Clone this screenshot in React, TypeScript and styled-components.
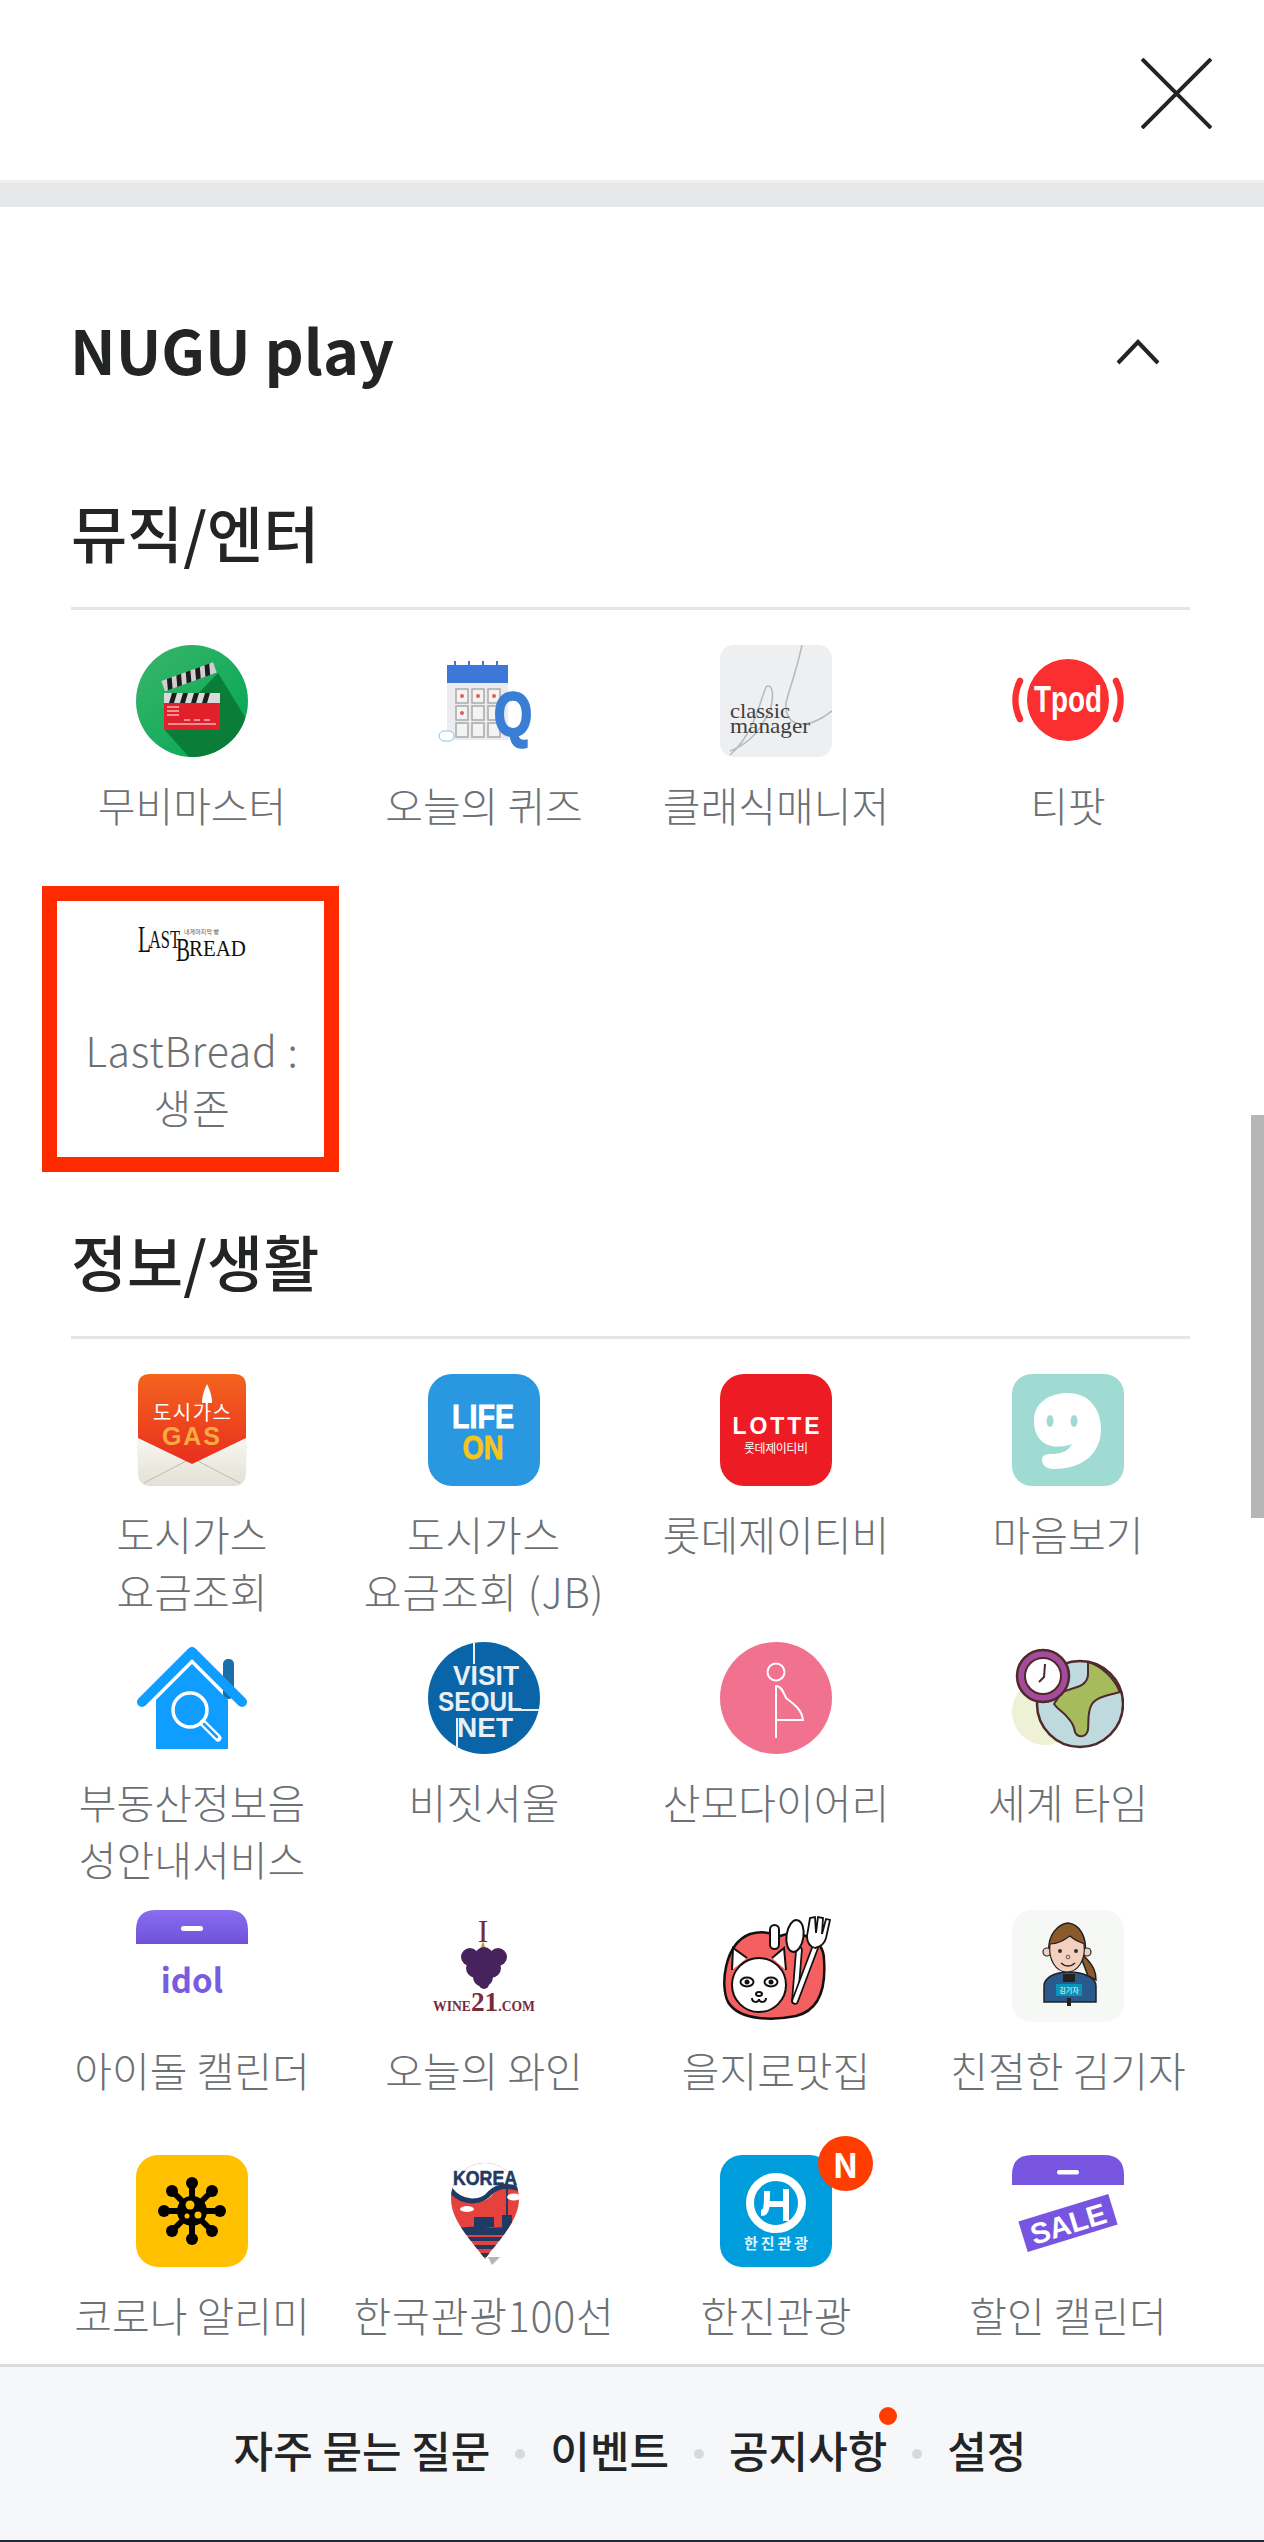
import React from 'react';
import styled, { createGlobalStyle } from 'styled-components';

const GlobalStyle = createGlobalStyle`
  html, body { margin: 0; padding: 0; background: #fff; }
  body { font-family: "Noto Sans CJK KR", "Noto Sans", sans-serif; }
  * { box-sizing: border-box; }
`;

const Page = styled.div`
  position: relative;
  width: 1264px;
  height: 2542px;
  display: flex;
  flex-direction: column;
  overflow: hidden;
  background: #fff;
`;

const Header = styled.header`
  height: 180px;
  flex: none;
  display: flex;
  justify-content: flex-end;
  align-items: center;
  padding: 7px 52px 0 0;
`;

const Band = styled.div`
  height: 27px;
  flex: none;
  background: #e6e7e9;
  border-top: 3px solid #eeeff0;
`;

const Main = styled.main`
  flex: 1;
  min-height: 0;
  overflow: hidden;
`;

const TitleRow = styled.div`
  display: flex;
  justify-content: space-between;
  align-items: center;
  height: 70px;
  margin-top: 110px;
  padding: 0 104px 0 70px;
`;

const Title = styled.h1`
  margin: -6px 0 0;
  font-size: 61px;
  line-height: 70px;
  font-weight: 700;
  color: #222426;
`;

const SectionHead = styled.h2<{ $gap: number }>`
  margin: ${(p) => p.$gap}px 74px 0 71px;
  padding-bottom: 40px;
  border-bottom: 3px solid #e4e5e6;
  font-size: 61px;
  line-height: 70px;
  font-weight: 500;
  color: #222426;
`;

const Grid = styled.div`
  display: grid;
  grid-template-columns: repeat(4, 292px);
  row-gap: 23px;
  margin-top: 35px;
  padding-left: 46px;
`;

const Item = styled.div`
  position: relative;
  min-height: 222px;
  display: flex;
  flex-direction: column;
  align-items: center;
`;

const IconBox = styled.div`
  position: relative;
  width: 112px;
  height: 112px;
  flex: none;
  svg { display: block; }
`;

const NewBadge = styled.span`
  position: absolute;
  left: 98px;
  top: -19px;
  width: 55px;
  height: 55px;
  border-radius: 50%;
  background: #ff3d00;
  color: #fff;
  font-size: 34px;
  line-height: 55px;
  font-weight: 700;
  text-align: center;
`;

const Label = styled.div<{ $wide?: boolean }>`
  margin-top: 19px;
  font-size: 41px;
  line-height: 57px;
  font-weight: 300;
  letter-spacing: ${(p) => (p.$wide ? '0.8px' : '0')};
  color: #6d7073;
  text-align: center;
  white-space: pre;
`;

const Highlight = styled.div`
  position: absolute;
  left: -4px;
  top: -4px;
  width: 297px;
  height: 286px;
  border: 15px solid #ff2a00;
  pointer-events: none;
`;

const ScrollThumb = styled.div`
  position: absolute;
  right: 0;
  top: 1115px;
  width: 13px;
  height: 403px;
  background: #b5b6b8;
`;

const Footer = styled.footer`
  height: 178px;
  flex: none;
  display: flex;
  justify-content: center;
  align-items: center;
  gap: 25px;
  padding-right: 4px;
  background: #f6f7f9;
  border-top: 3px solid #dcdddf;
  border-bottom: 2px solid #1f2a35;
`;

const FooterLink = styled.a`
  position: relative;
  margin-top: -8px;
  font-size: 43px;
  line-height: 57px;
  font-weight: 500;
  color: #222426;
`;

const FooterDot = styled.span`
  width: 10px;
  height: 10px;
  border-radius: 50%;
  background: #d8d9db;
`;

const NoticeDot = styled.span`
  position: absolute;
  right: -10px;
  top: -14px;
  width: 18px;
  height: 18px;
  border-radius: 50%;
  background: #ff3d00;
`;

const Svg = ({ children }: { children: React.ReactNode }) => (
  <svg width="112" height="112" viewBox="0 0 112 112" fill="none">
    {children}
  </svg>
);

const serif = '"Liberation Serif", serif';
const sans = '"Liberation Sans", sans-serif';
const kr = '"Noto Sans CJK KR", sans-serif';

const MovieIcon = () => (
  <Svg>
    <defs>
      <linearGradient id="mv" x1="0" y1="0" x2="1" y2="1">
        <stop offset="0" stopColor="#3bb56a" />
        <stop offset="1" stopColor="#00a653" />
      </linearGradient>
      <clipPath id="mvc"><circle cx="56" cy="56" r="56" /></clipPath>
    </defs>
    <circle cx="56" cy="56" r="56" fill="url(#mv)" />
    <path d="M82 28L120 90L60 120L28 84Z" fill="#0a7d38" clipPath="url(#mvc)" />
    <g transform="rotate(-20 30 46)">
      <rect x="29" y="35" width="55" height="11" fill="#cfcfcf" />
      <path d="M35 35h5l-3 11h-5zM45 35h5l-3 11h-5zM55 35h5l-3 11h-5zM65 35h5l-3 11h-5zM75 35h5l-3 11h-5z" fill="#1c1c1c" />
    </g>
    <rect x="28" y="48" width="56" height="10" fill="#d9d9d9" />
    <path d="M36 48h5l-3 10h-5zM47 48h5l-3 10h-5zM58 48h5l-3 10h-5zM69 48h5l-3 10h-5z" fill="#1c1c1c" />
    <rect x="28" y="58" width="56" height="27" fill="#e2202c" />
    <path d="M31 62h12M31 66h12M31 70h12M48 75h6M58 75h6M68 75h6M32 79h48" stroke="#f5b5b5" strokeWidth="1.4" />
  </Svg>
);

const QuizIcon = () => (
  <Svg>
    <rect x="19" y="20" width="61" height="75" fill="#ececef" />
    <rect x="19" y="20" width="61" height="18" fill="#3d78d8" />
    <path d="M27 16v12M41 16v12M55 16v12M69 16v12" stroke="#3d78d8" strokeWidth="2" />
    {[0, 1, 2].map((c) =>
      [0, 1, 2].map((r) => (
        <rect key={`${c}${r}`} x={28 + c * 16} y={44 + r * 17} width="12" height="14" fill="#f3f3f3" stroke="#a9a9a9" strokeWidth="1.5" />
      ))
    )}
    <circle cx="34" cy="51" r="2" fill="#e45b5b" />
    <circle cx="50" cy="51" r="2" fill="#e45b5b" />
    <circle cx="66" cy="51" r="2" fill="#e45b5b" />
    <circle cx="34" cy="68" r="2" fill="#e45b5b" />
    <text x="85" y="90" textAnchor="middle" fontFamily={sans} fontWeight="700" fontSize="62" fill="#3a7fd5" stroke="#3a7fd5" strokeWidth="2.5" textLength="38" lengthAdjust="spacingAndGlyphs">Q</text>
    <rect x="11" y="86" width="15" height="10" rx="5" fill="#fff" stroke="#8cc4ea" />
  </Svg>
);

const ClassicIcon = () => (
  <Svg>
    <rect width="112" height="112" rx="14" fill="#eeeff1" />
    <path d="M82 0C76 28 68 48 66 58C64 80 84 88 112 66M46 42C38 62 34 88 10 110M46 42C54 36 56 60 44 76C38 88 26 100 10 106" stroke="#b9babc" strokeWidth="1.6" />
    <text x="10" y="73" fontFamily={serif} fontSize="22" fill="#3e3f41" textLength="60" lengthAdjust="spacingAndGlyphs">classic</text>
    <text x="10" y="88" fontFamily={serif} fontSize="22" fill="#3e3f41" textLength="80" lengthAdjust="spacingAndGlyphs">manager</text>
  </Svg>
);

const TpodIcon = () => (
  <Svg>
    <circle cx="56" cy="55" r="41" fill="#fb2f2f" />
    <path d="M8 36C2 48 2 62 8 74M104 36C110 48 110 62 104 74" stroke="#fb2f2f" strokeWidth="6.5" strokeLinecap="round" />
    <text x="56" y="67" textAnchor="middle" fontFamily={sans} fontWeight="700" fontSize="36" fill="#fff" textLength="68" lengthAdjust="spacingAndGlyphs">Tpod</text>
  </Svg>
);

const BreadIcon = () => (
  <Svg>
    <text x="2" y="62" fontFamily={serif} fontSize="38" fill="#111" textLength="13" lengthAdjust="spacingAndGlyphs">L</text>
    <text x="13" y="58" fontFamily={serif} fontSize="25" fill="#111" textLength="31" lengthAdjust="spacingAndGlyphs">AST</text>
    <text x="40" y="71" fontFamily={serif} fontSize="34" fill="#111" textLength="14" lengthAdjust="spacingAndGlyphs">B</text>
    <text x="53" y="66" fontFamily={serif} fontSize="23" fill="#111" textLength="57" lengthAdjust="spacingAndGlyphs">READ</text>
    <text x="48" y="44" fontFamily={kr} fontSize="6" fill="#555" textLength="35">내게마지막 빵</text>
  </Svg>
);

const GasIcon = () => (
  <Svg>
    <defs>
      <linearGradient id="gas" x1="0" y1="0" x2="0" y2="1">
        <stop offset="0" stopColor="#f4641f" />
        <stop offset="1" stopColor="#e82e1e" />
      </linearGradient>
      <linearGradient id="env" x1="0" y1="0" x2="0" y2="1">
        <stop offset="0" stopColor="#f7f6f0" />
        <stop offset="1" stopColor="#e3e1d4" />
      </linearGradient>
    </defs>
    <path d="M1 66L2 100Q3 112 14 112H98Q109 112 110 100L111 66Z" fill="url(#env)" />
    <path d="M8 109L56 84L104 109" stroke="#bdbcb0" strokeWidth="1" />
    <path d="M2 64V12Q2 0 14 0H98Q110 0 110 12V64L56 90Z" fill="url(#gas)" />
    <path d="M71 10C67 18 66 24 66 29H76C76 24 75 18 71 10Z" fill="#fff" />
    <text x="56" y="46" textAnchor="middle" fontFamily={kr} fontSize="20" fill="#fff" textLength="78">도시가스</text>
    <text x="55" y="71" textAnchor="middle" fontFamily={sans} fontWeight="700" fontSize="25" fill="#f6ab40" textLength="58">GAS</text>
  </Svg>
);

const LifeIcon = () => (
  <Svg>
    <rect width="112" height="112" rx="24" fill="#2a98e0" />
    <text x="55" y="54" textAnchor="middle" fontFamily={sans} fontWeight="700" fontSize="33" fill="#fff" stroke="#fff" strokeWidth="0.8" textLength="62" lengthAdjust="spacingAndGlyphs">LIFE</text>
    <text x="55" y="85" textAnchor="middle" fontFamily={sans} fontWeight="700" fontSize="33" fill="#f5c51c" stroke="#f5c51c" strokeWidth="0.8" textLength="41" lengthAdjust="spacingAndGlyphs">ON</text>
  </Svg>
);

const LotteIcon = () => (
  <Svg>
    <rect width="112" height="112" rx="24" fill="#ed1c24" />
    <text x="56" y="60" textAnchor="middle" fontFamily={sans} fontWeight="700" fontSize="23" fill="#fff" textLength="87" lengthAdjust="spacing">LOTTE</text>
    <text x="56" y="79" textAnchor="middle" fontFamily={kr} fontSize="12" fill="#fff" textLength="64">롯데제이티비</text>
  </Svg>
);

const MindIcon = () => (
  <Svg>
    <rect width="112" height="112" rx="20" fill="#a0dbd3" />
    <path d="M22 47C22 28 38 19 56 19C76 19 89 34 89 55C89 80 70 95 42 95C33 95 30 90 30 86C30 82 33 80 38 80C48 80 56 78 60 70C40 77 22 70 22 47Z" fill="#fff" />
    <ellipse cx="38" cy="47" rx="3.5" ry="6" fill="#a0dbd3" />
    <ellipse cx="62" cy="47" rx="3.5" ry="6" fill="#a0dbd3" />
  </Svg>
);

const HouseIcon = () => (
  <Svg>
    <rect x="87" y="17" width="11" height="40" rx="5" fill="#1a6fa8" />
    <path d="M20 107V58L56 22L92 58V107Z" fill="#0f9dff" />
    <path d="M6 60L56 10L106 60" stroke="#0f9dff" strokeWidth="10" strokeLinecap="round" strokeLinejoin="round" />
    <circle cx="54" cy="68" r="17" stroke="#fff" strokeWidth="3.5" />
    <path d="M67 81L82 96" stroke="#fff" strokeWidth="7" strokeLinecap="round" />
    <path d="M68 82L81 95" stroke="#0f9dff" strokeWidth="2.5" strokeLinecap="round" />
  </Svg>
);

const SeoulIcon = () => (
  <Svg>
    <circle cx="56" cy="56" r="56" fill="#0a65a8" />
    <text x="58" y="43" textAnchor="middle" fontFamily={sans} fontWeight="700" fontSize="27" fill="#e8f0f6" textLength="66" lengthAdjust="spacingAndGlyphs">VISIT</text>
    <text x="52" y="69" textAnchor="middle" fontFamily={sans} fontWeight="700" fontSize="27" fill="#e8f0f6" textLength="84" lengthAdjust="spacingAndGlyphs">SEOUL</text>
    <text x="57" y="95" textAnchor="middle" fontFamily={sans} fontWeight="700" fontSize="27" fill="#e8f0f6" textLength="56" lengthAdjust="spacingAndGlyphs">NET</text>
    <path d="M46 0V22M92 68H112M29 76V108" stroke="#e8f0f6" strokeWidth="2" />
  </Svg>
);

const MomIcon = () => (
  <Svg>
    <circle cx="56" cy="56" r="56" fill="#f0728f" />
    <circle cx="56" cy="30" r="8.5" stroke="#fff" strokeWidth="2" />
    <path d="M56 96V44C62 44 64 52 66 56C74 62 82 68 83 78H56" stroke="#fff" strokeWidth="2" />
  </Svg>
);

const WorldIcon = () => (
  <Svg>
    <circle cx="33" cy="70" r="33" fill="#eef1d6" />
    <circle cx="68" cy="62" r="43" fill="#bfdadf" stroke="#4e2a2a" strokeWidth="2.5" />
    <path d="M76 20L76 32C76 40 70 44 62 46L50 50L42 62C46 68 52 70 56 76C60 80 62 84 63 90C66 96 74 96 76 88C77 78 75 70 80 62C84 56 92 54 108 50C102 36 90 24 76 20Z" fill="#a6bb5c" stroke="#4e2a2a" strokeWidth="2" />
    <circle cx="31" cy="34" r="26" fill="#a64a9c" stroke="#4e2a2a" strokeWidth="2.5" />
    <circle cx="31" cy="34" r="18" fill="#fff" stroke="#4e2a2a" strokeWidth="2" />
    <path d="M33 22L32 35L27 40" stroke="#4e2a2a" strokeWidth="2" />
  </Svg>
);

const IdolIcon = () => (
  <Svg>
    <defs>
      <linearGradient id="idl" x1="0" y1="0" x2="0" y2="1">
        <stop offset="0" stopColor="#8a6cf0" />
        <stop offset="1" stopColor="#6f52d8" />
      </linearGradient>
    </defs>
    <path d="M0 34V20Q0 0 20 0H92Q112 0 112 20V34Z" fill="url(#idl)" />
    <rect x="45" y="16" width="22" height="5" rx="2.5" fill="#fff" />
    <text x="56" y="83" textAnchor="middle" fontFamily={kr} fontWeight="700" fontSize="33" fill="#7a5ce0">idol</text>
  </Svg>
);

const WineIcon = () => (
  <Svg>
    <text x="55" y="32" textAnchor="middle" fontFamily={serif} fontSize="32" fill="#7a2a3a">I</text>
    <path d="M55 31L52 40H58Z" fill="#c79a3a" />
    <g fill="#46235c">
      <circle cx="42" cy="47" r="9" />
      <circle cx="56" cy="46" r="9" />
      <circle cx="70" cy="47" r="9" />
      <circle cx="48" cy="58" r="10" />
      <circle cx="63" cy="58" r="10" />
      <circle cx="55" cy="67" r="10" />
      <circle cx="56" cy="74" r="5" />
    </g>
    <text x="56" y="101" textAnchor="middle" fontFamily={serif} fontWeight="700" fontSize="14" fill="#7a2a3a" textLength="102" lengthAdjust="spacingAndGlyphs">
      WINE<tspan fontSize="28">21</tspan>.COM
    </text>
  </Svg>
);

const EuljiroIcon = () => (
  <Svg>
    <path d="M30 24C44 20 52 24 60 26C76 20 104 26 104 50C106 78 100 100 76 106C56 110 20 112 8 92C0 76 4 34 30 24Z" fill="#f45f5f" stroke="#111" strokeWidth="2.5" />
    <rect x="50" y="15" width="9" height="24" rx="4.5" fill="#fff" stroke="#111" strokeWidth="2" />
    <path d="M75 90L79 40" stroke="#111" strokeWidth="7.5" strokeLinecap="round" />
    <path d="M75 90L79 40" stroke="#fff" strokeWidth="4" strokeLinecap="round" />
    <ellipse cx="75" cy="26" rx="8.5" ry="16" fill="#fff" stroke="#111" strokeWidth="2" transform="rotate(8 75 26)" />
    <path d="M75 91L95 38" stroke="#111" strokeWidth="7.5" strokeLinecap="round" />
    <path d="M75 91L95 38" stroke="#fff" strokeWidth="4" strokeLinecap="round" />
    <path d="M90 8L87 26Q87 36 95 38Q104 36 106 28L110 10L106 9L102 24L103 8L98 7L96 23L95 7Z" fill="#fff" stroke="#111" strokeWidth="1.8" />
    <path d="M12 60L13 38L27 48" fill="#fff" stroke="#111" strokeWidth="2" />
    <path d="M52 48L64 38L66 60" fill="#fff" stroke="#111" strokeWidth="2" />
    <circle cx="39" cy="75" r="27" fill="#fff" stroke="#111" strokeWidth="2" />
    <ellipse cx="27" cy="72" rx="6.5" ry="4.5" stroke="#111" strokeWidth="2" />
    <ellipse cx="51" cy="72" rx="6.5" ry="4.5" stroke="#111" strokeWidth="2" />
    <circle cx="27" cy="72" r="2.5" fill="#111" />
    <circle cx="51" cy="72" r="2.5" fill="#111" />
    <path d="M39 82c-4 0-4 4 0 4c4 0 4-4 0-4M32 88c0 5 7 5 7 1c0 4 7 4 7-1" stroke="#111" strokeWidth="2" />
  </Svg>
);

const ReporterIcon = () => (
  <Svg>
    <rect width="112" height="112" rx="20" fill="#f5f8f5" />
    <path d="M72 46C82 56 84 62 84 70L76 66L70 50Z" fill="#8b5a2b" stroke="#222" strokeWidth="1.5" />
    <path d="M32 92V76C32 68 42 62 57 62C72 62 84 68 84 76V92Z" fill="#2a5a8c" stroke="#222" strokeWidth="1.5" />
    <path d="M37 42C35 24 47 14 56 13C68 14 75 28 73 42Z" fill="#8b5a2b" stroke="#222" strokeWidth="1.5" />
    <circle cx="35" cy="42" r="4" fill="#f3cfc0" stroke="#222" strokeWidth="1.2" />
    <circle cx="75" cy="42" r="4" fill="#f3cfc0" stroke="#222" strokeWidth="1.2" />
    <path d="M38 34C46 34 52 30 58 26C62 30 68 32 72 34C74 50 66 62 55 62C44 62 36 50 38 34Z" fill="#f3cfc0" stroke="#222" strokeWidth="1.2" />
    <circle cx="48" cy="41" r="2" fill="#333" />
    <circle cx="64" cy="41" r="2" fill="#333" />
    <circle cx="56" cy="47" r="1.8" stroke="#555" />
    <path d="M49 53C53 57 59 57 63 53" stroke="#222" strokeWidth="1.3" />
    <path d="M51 64H63V72H51ZM55 88H59V96H55Z" fill="#222" />
    <rect x="44" y="74" width="26" height="12" fill="#0b93b8" />
    <text x="57" y="83" textAnchor="middle" fontFamily={kr} fontSize="7" fill="#fff">김기자</text>
  </Svg>
);

const CoronaIcon = () => (
  <Svg>
    <rect width="112" height="112" rx="22" fill="#ffc000" />
    <g stroke="#000" strokeWidth="6">
      <path d="M56 56V24M56 56V88M56 56H24M56 56H88M56 56L33 33M56 56L79 33M56 56L33 79M56 56L79 79" />
    </g>
    <g fill="#000">
      <circle cx="56" cy="56" r="15" />
      <circle cx="56" cy="28" r="6" /><circle cx="56" cy="84" r="6" />
      <circle cx="28" cy="56" r="6" /><circle cx="84" cy="56" r="6" />
      <circle cx="36" cy="36" r="6" /><circle cx="76" cy="36" r="6" />
      <circle cx="36" cy="76" r="6" /><circle cx="76" cy="76" r="6" />
    </g>
    <circle cx="54" cy="50" r="4.5" fill="#ffc000" />
    <circle cx="62" cy="60" r="3.5" fill="#ffc000" />
    <circle cx="51" cy="61" r="2.5" fill="#ffc000" />
  </Svg>
);

const KoreaIcon = () => (
  <Svg>
    <defs>
      <clipPath id="pin"><path d="M57 8C76 8 91 24 91 44C91 66 70 86 57 104C44 86 23 66 23 44C23 24 38 8 57 8Z" /></clipPath>
    </defs>
    <path d="M60 102L72 102L64 110Z" fill="#b5b5b5" />
    <g clipPath="url(#pin)">
      <rect x="20" y="0" width="74" height="110" fill="#e5423e" />
      <path d="M20 0H94V36C80 30 70 32 64 40C54 52 34 48 23 36L20 32Z" fill="#fff" />
      <path d="M22 34C32 48 52 50 62 38C70 30 80 30 92 34" stroke="#1f3a63" strokeWidth="5" />
      <path d="M20 72C34 74 46 70 57 72C70 74 80 70 94 72V80H20Z" fill="#1f3a63" />
      <path d="M30 84H84M36 92H78M44 100H70" stroke="#1f3a63" strokeWidth="4" />
      <path d="M79 28V62" stroke="#1f3a63" strokeWidth="2" />
      <rect x="74" y="60" width="10" height="12" fill="#1f3a63" />
      <rect x="46" y="62" width="20" height="10" fill="#1f3a63" />
      <ellipse cx="39" cy="54" rx="7" ry="3" fill="#fff" />
      <ellipse cx="86" cy="42" rx="7" ry="3.5" fill="#fff" />
    </g>
    <text x="57" y="30" textAnchor="middle" fontFamily={sans} fontWeight="700" fontSize="21" fill="#1f3a63" stroke="#1f3a63" strokeWidth="0.6" textLength="64" lengthAdjust="spacingAndGlyphs">KOREA</text>
  </Svg>
);

const HanjinIcon = () => (
  <Svg>
    <rect width="112" height="112" rx="22" fill="#009ddd" />
    <circle cx="56" cy="48" r="26" stroke="#fff" strokeWidth="8" />
    <path d="M41 58C47 58 47 52 47 36M66 34V66M47 49H66" stroke="#fff" strokeWidth="6" />
    <text x="56" y="94" textAnchor="middle" fontFamily={kr} fontWeight="700" fontSize="15" fill="#dff2fb" textLength="64">한진관광</text>
  </Svg>
);

const SaleIcon = () => (
  <Svg>
    <path d="M0 30V20Q0 0 20 0H92Q112 0 112 20V30Z" fill="#7755e0" />
    <rect x="45" y="15" width="22" height="4.5" rx="2" fill="#fff" />
    <g transform="rotate(-17 56 68)">
      <rect x="9" y="52" width="94" height="32" fill="#7755e0" />
      <text x="56" y="79" textAnchor="middle" fontFamily={sans} fontWeight="700" fontSize="29" fill="#fff" textLength="78" lengthAdjust="spacingAndGlyphs">SALE</text>
    </g>
  </Svg>
);

type App = { name: string; icon: React.ReactNode; isNew?: boolean; marked?: boolean; wide?: boolean };

const musicApps: App[] = [
  { name: '무비마스터', icon: <MovieIcon /> },
  { name: '오늘의 퀴즈', icon: <QuizIcon /> },
  { name: '클래식매니저', icon: <ClassicIcon /> },
  { name: '티팟', icon: <TpodIcon /> },
  { name: 'LastBread :\n생존', icon: <BreadIcon />, marked: true, wide: true },
];

const lifeApps: App[] = [
  { name: '도시가스\n요금조회', icon: <GasIcon /> },
  { name: '도시가스\n요금조회 (JB)', icon: <LifeIcon />, wide: true },
  { name: '롯데제이티비', icon: <LotteIcon /> },
  { name: '마음보기', icon: <MindIcon /> },
  { name: '부동산정보음\n성안내서비스', icon: <HouseIcon /> },
  { name: '비짓서울', icon: <SeoulIcon /> },
  { name: '산모다이어리', icon: <MomIcon /> },
  { name: '세계 타임', icon: <WorldIcon /> },
  { name: '아이돌 캘린더', icon: <IdolIcon /> },
  { name: '오늘의 와인', icon: <WineIcon /> },
  { name: '을지로맛집', icon: <EuljiroIcon /> },
  { name: '친절한 김기자', icon: <ReporterIcon /> },
  { name: '코로나 알리미', icon: <CoronaIcon /> },
  { name: '한국관광100선', icon: <KoreaIcon />, wide: true },
  { name: '한진관광', icon: <HanjinIcon />, isNew: true },
  { name: '할인 캘린더', icon: <SaleIcon /> },
];

const AppGrid = ({ apps }: { apps: App[] }) => (
  <Grid>
    {apps.map((app) => (
      <Item key={app.name}>
        <IconBox>
          {app.icon}
          {app.isNew && <NewBadge>N</NewBadge>}
        </IconBox>
        <Label $wide={app.wide}>{app.name}</Label>
        {app.marked && <Highlight />}
      </Item>
    ))}
  </Grid>
);

export default function App() {
  return (
    <Page>
      <GlobalStyle />
      <Header>
        <svg width="71" height="71" viewBox="0 0 71 71" fill="none">
          <path d="M1 1L70 70M70 1L1 70" stroke="#222426" strokeWidth="4" />
        </svg>
      </Header>
      <Band />
      <Main>
        <TitleRow>
          <Title>NUGU play</Title>
          <svg width="44" height="26" viewBox="0 0 44 26" fill="none">
            <path d="M2 24L22 3L42 24" stroke="#222426" strokeWidth="4" />
          </svg>
        </TitleRow>
        <SectionHead $gap={110}>뮤직/엔터</SectionHead>
        <AppGrid apps={musicApps} />
        <SectionHead $gap={91}>정보/생활</SectionHead>
        <AppGrid apps={lifeApps} />
      </Main>
      <Footer>
        <FooterLink>자주 묻는 질문</FooterLink>
        <FooterDot />
        <FooterLink>이벤트</FooterLink>
        <FooterDot />
        <FooterLink>
          공지사항
          <NoticeDot />
        </FooterLink>
        <FooterDot />
        <FooterLink>설정</FooterLink>
      </Footer>
      <ScrollThumb />
    </Page>
  );
}
